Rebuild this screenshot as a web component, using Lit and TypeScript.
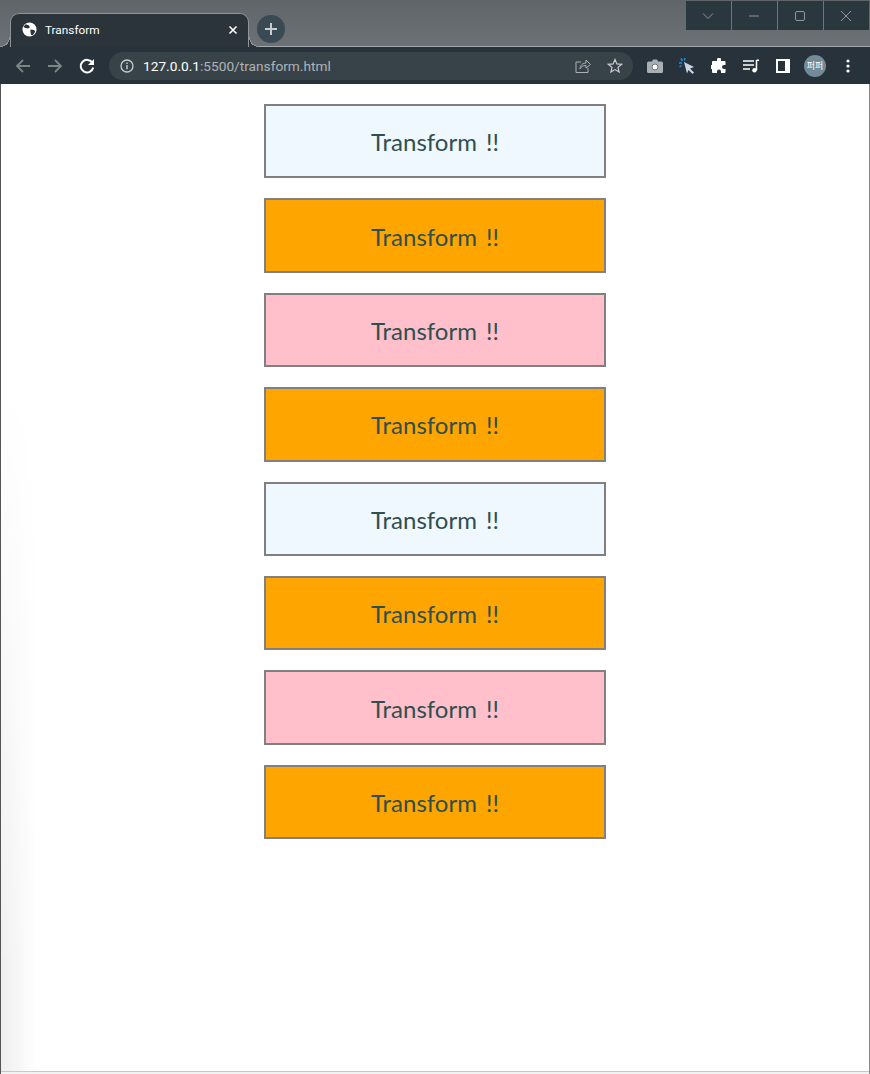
import { LitElement, html, css } from "lit";
import { customElement } from "lit/decorators.js";

const COLORS = ["#f0f8ff", "#ffa500", "#ffc0cb", "#ffa500", "#f0f8ff", "#ffa500", "#ffc0cb", "#ffa500"];

@customElement("app-root")
export class AppRoot extends LitElement {
  static styles = css`
    :host { display: flex; flex-direction: column; width: 870px; height: 1074px; overflow: hidden; background: #fff; font-family: Roboto, sans-serif; box-sizing: border-box; position: relative; }
    .tabstrip { height: 46px; background: linear-gradient(#5f6569, #6b7175); display: flex; align-items: flex-end; position: relative; padding-left: 10px; flex: none; border-bottom: 1px solid #a3a9ad; }
    .tab { width: 239px; height: 34px; background: #2b343b; border: 1px solid #8d959a; border-bottom: none; border-radius: 9px 9px 0 0; box-sizing: border-box; display: flex; align-items: center; padding: 0 10px 2px 11px; color: #fff; font-size: 11.8px; margin-bottom: -1px; position: relative; }
    .tab::before, .tab::after { content: ""; position: absolute; bottom: 0; width: 10px; height: 10px; }
    .tab::before { left: -11px; background: radial-gradient(circle at 0 0, transparent 9px, #8d959a 9px, #8d959a 10px, #2b343b 10px); }
    .tab::after { right: -11px; background: radial-gradient(circle at 100% 0, transparent 9px, #8d959a 9px, #8d959a 10px, #2b343b 10px); }
    .tab .title { flex: 1; margin-left: 8px; }
    .newtab { width: 28px; height: 28px; border-radius: 50%; background: #3a4a54; margin: 0 0 3px 8px; display: flex; align-items: center; justify-content: center; }
    .winctl { position: absolute; top: 1px; right: 1px; display: flex; height: 29px; }
    .winctl div { width: 46px; background: #2b373e; border-left: 1px solid #6f767a; box-sizing: border-box; display: flex; align-items: center; justify-content: center; padding-right: 2px; }
    .winctl div:first-child { width: 45px; border-left: none; }
    .toolbar { height: 37px; background: #27323a; display: flex; align-items: center; flex: none; padding-left: 13px; }
    .navs { display: flex; gap: 12px; align-items: center; }
    .omni { margin-left: 12px; width: 524px; height: 28px; background: #384349; border-radius: 14px; display: flex; align-items: center; padding: 0 10px 0 11px; box-sizing: border-box; color: #aeb4b8; }
    .url { margin-left: 9px; flex: 1; font-size: 13.7px; }
    .url b { font-weight: 400; color: #fff; }
    .share { margin-right: 16px; }
    .exts { display: flex; align-items: center; margin-left: 6px; }
    .slot { width: 32px; height: 32px; display: flex; align-items: center; justify-content: center; }
    .dots { margin-left: 1px; }
    .avatar { width: 22px; height: 22px; border-radius: 50%; background: #738a99; color: #fff; font-size: 9px; display: flex; align-items: center; justify-content: center; font-family: "Noto Sans CJK KR", sans-serif; white-space: nowrap; }
    .page { flex: 1; position: relative; display: flex; flex-direction: column; align-items: center; padding-top: 20px; gap: 20px; border-left: 1px solid #555; border-right: 1px solid #8a8a8a; box-sizing: border-box; }
    .page::before { content: ""; position: absolute; left: 0; top: 0; bottom: 0; width: 36px; background: linear-gradient(90deg, #efefef, #fff); -webkit-mask: linear-gradient(180deg, transparent 0, transparent 30%, #000 90%); mask: linear-gradient(180deg, transparent 0, transparent 30%, #000 90%); }
    .page::after { content: ""; position: absolute; left: 0; right: 0; bottom: 0; height: 2px; background: #f2f2f2; border-top: 1px solid #c8c8c8; }
    .box { width: 342px; height: 74.4px; flex: none; border: 2px solid #808080; box-sizing: border-box; padding-top: 1px; display: flex; align-items: center; justify-content: center; color: #2f4f4f; font-size: 24px; font-family: Lato, sans-serif; word-spacing: 3px; position: relative; }
  `;

  render() {
    return html`
      <div class="tabstrip">
        <div class="tab">
          <svg width="15" height="15" viewBox="0 0 16 16"><circle cx="8" cy="8" r="7.5" fill="#fff"/><path d="M4 2.500l3 1 1.500 2-2 1.500-3-.5-2-1.500zM9 8l4 .5 1 2-2.500 3.500-2-.5-.5-3z" fill="#2b343b"/></svg>
          <span class="title">Transform</span>
          <svg width="10" height="10" viewBox="0 0 10 10"><path d="M1.500 1.500l7 7M8.500 1.500l-7 7" stroke="#fff" stroke-width="1.600"/></svg>
        </div>
        <div class="newtab"><svg width="14" height="14" viewBox="0 0 14 14"><path d="M7 1v12M1 7h12" stroke="#c6ccd0" stroke-width="2"/></svg></div>
        <div class="winctl">
          <div><svg width="12" height="12" viewBox="0 0 12 12" fill="none"><path d="M1 3.500l5 5 5-5" stroke="#8d969b"/></svg></div>
          <div><svg width="12" height="12" viewBox="0 0 12 12" fill="none"><path d="M1 6h10" stroke="#8d969b"/></svg></div>
          <div><svg width="12" height="12" viewBox="0 0 12 12" fill="none"><rect x="1.500" y="1.500" width="9" height="9" rx="1.500" stroke="#8d969b"/></svg></div>
          <div><svg width="12" height="12" viewBox="0 0 12 12" fill="none"><path d="M1 1l10 10M11 1L1 11" stroke="#8d969b"/></svg></div>
        </div>
      </div>
      <div class="toolbar">
        <div class="navs">
          <svg width="20" height="20" viewBox="0 0 20 20" fill="none"><path d="M17 10H4M10 4l-6 6 6 6" stroke="#7c8488" stroke-width="1.800"/></svg>
          <svg width="20" height="20" viewBox="0 0 20 20" fill="none"><path d="M3 10h13M10 4l6 6-6 6" stroke="#7c8488" stroke-width="1.800"/></svg>
          <svg width="20" height="20" viewBox="0 0 20 20" fill="none"><path d="M15.500 7A6.300 6.300 0 1 0 16.200 11.500" stroke="#fff" stroke-width="2"/><path d="M17 3v6h-6z" fill="#fff"/></svg>
        </div>
        <div class="omni">
          <svg width="14" height="14" viewBox="0 0 14 14" fill="none"><circle cx="7" cy="7" r="6" stroke="#c8ccd0" stroke-width="1.300"/><path d="M7 6v4.200M7 3.600v1.400" stroke="#c8ccd0" stroke-width="1.400"/></svg>
          <span class="url"><b>127.0.0.1</b>:5500/transform.html</span>
          <svg class="share" width="16" height="16" viewBox="0 0 16 16" fill="none"><path d="M6 4H1v10.500h12V10M5 11c0-4 3-6 6-6V2l4.500 4.500L11 10V7.500c-3 0-5 1-6 3.500z" stroke="#aab0b4" stroke-width="1"/></svg>
          <svg width="16" height="16" viewBox="0 0 16 16" fill="none"><path d="M8 1.500l1.900 4.400 4.700.4-3.600 3.100 1.100 4.600L8 11.600 3.900 14l1.100-4.600L1.400 6.300l4.700-.4z" stroke="#c8ccd0" stroke-width="1.200"/></svg>
        </div>
        <div class="exts">
          <div class="slot"><svg width="16" height="14" viewBox="0 0 16 14"><path d="M1.500 2.500H5L6 .5h4l1 2h3.500A1.500 1.500 0 0 1 16 4v8.500A1.500 1.500 0 0 1 14.500 14h-13A1.500 1.500 0 0 1 0 12.500V4a1.500 1.500 0 0 1 1.500-1.500z" fill="#a9afb2"/><circle cx="8" cy="8" r="3" fill="#fff" stroke="#6d7478" stroke-width="1"/></svg></div>
          <div class="slot"><svg width="18" height="18" viewBox="0 0 18 18"><path d="M6 5l10 5-4 1.500 4 4-1.500 1.500-4-4-1.500 3.500z" fill="#c9d6e6"/><path d="M1 6h3M3 1.500l1.500 2.500M7 1l-.5 2.500M1.500 10l2-1.500" stroke="#1a8fe6" stroke-width="1.500"/></svg></div>
          <div class="slot"><svg width="16" height="16" viewBox="0 0 16 16"><path d="M6 1.500a2 2 0 0 1 4 0V3h3.500a1 1 0 0 1 1 1v3h-1.500a2 2 0 0 0 0 4h1.500v3a1 1 0 0 1-1 1H10v-1.500a2 2 0 0 0-4 0V15H2a1 1 0 0 1-1-1v-3H.5a2 2 0 0 1 0-4H1V4a1 1 0 0 1 1-1h4z" fill="#fff"/></svg></div>
          <div class="slot"><svg width="18" height="14" viewBox="0 0 18 14" fill="none"><path d="M1 2h11M1 6h11M1 10h7" stroke="#fff" stroke-width="1.500"/><path d="M14.500 1.200h2.500M14.500 1v10" stroke="#fff" stroke-width="1.500"/><circle cx="12.500" cy="11.300" r="2.200" fill="#fff"/></svg></div>
          <div class="slot"><svg width="14" height="14" viewBox="0 0 14 14"><rect width="14" height="14" fill="#fff"/><rect x="2" y="2" width="7" height="10" fill="#27323a"/></svg></div>
          <div class="slot"><div class="avatar">퍼퍼</div></div>
          <div class="slot dots"><svg width="4" height="14" viewBox="0 0 4 14"><circle cx="2" cy="2" r="1.600" fill="#fff"/><circle cx="2" cy="7" r="1.600" fill="#fff"/><circle cx="2" cy="12" r="1.600" fill="#fff"/></svg></div>
        </div>
      </div>
      <div class="page">
        ${COLORS.map((c) => html`<div class="box" style="background:${c}">Transform !!</div>`)}
      </div>
    `;
  }
}
